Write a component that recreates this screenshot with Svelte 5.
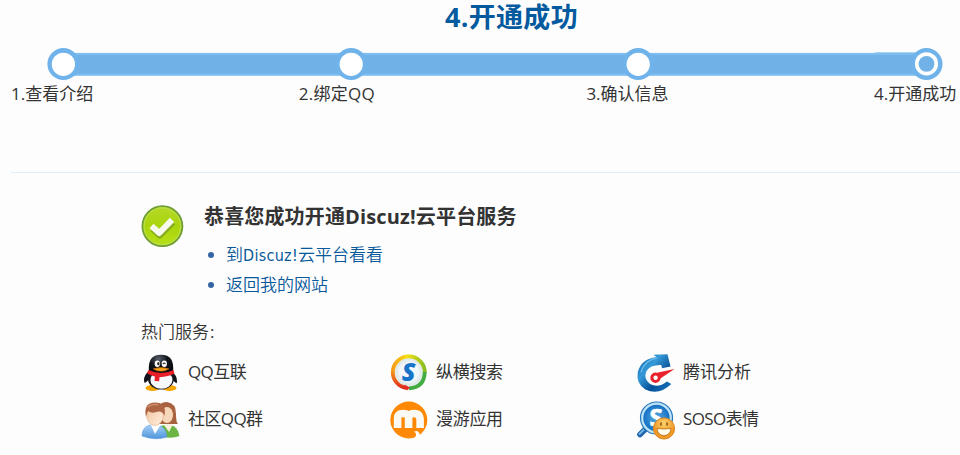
<script>
  const steps = ['1.查看介绍', '2.绑定QQ', '3.确认信息', '4.开通成功'];
  const services = [
    { name: 'QQ互联', icon: 'penguin' },
    { name: '纵横搜索', icon: 'search' },
    { name: '腾讯分析', icon: 'gauge' },
    { name: '社区QQ群', icon: 'people' },
    { name: '漫游应用', icon: 'roam' },
    { name: 'SOSO表情', icon: 'soso' }
  ];
</script>

<main>
  <h1>4.开通成功</h1>
  <svg class="track" width="960" height="32" viewBox="0 0 960 32">
    <rect x="63" y="4.9" width="863" height="22.9" fill="#7dbdf0" />
    <rect x="875" y="4.4" width="51" height="22.6" fill="#7dbdf0" />
    <rect x="63" y="7" width="863" height="18.5" fill="#70b2e7" />
    {#each [63.4, 351.2, 638.2, 926.5] as cx, i}
      <circle {cx} cy="16" r="16" fill="#70b3ea" />
      <circle {cx} cy={i === 3 ? 15.8 : 16.3} r="11.6" fill="#fff" />
      {#if i === 3}<circle {cx} cy="15.8" r="7.9" fill="#70b2e7" />{/if}
    {/each}
  </svg>
  <div class="steps">
    {#each steps as s}<span>{s}</span>{/each}
  </div>
  <section>
    <div class="result">
      <svg class="ok" width="44" height="44" viewBox="0 0 44 44">
        <defs>
          <linearGradient id="okg" x1="0" y1="0" x2="0" y2="1">
            <stop offset="0" stop-color="#b5d928" /><stop offset=".5" stop-color="#a9d50b" /><stop offset="1" stop-color="#b7e01a" />
          </linearGradient>
        </defs>
        <circle cx="22.4" cy="22.2" r="20" fill="url(#okg)" stroke="#6f9d35" stroke-width="1.8" />
        <circle cx="22.4" cy="22.2" r="18.4" fill="none" stroke="#bfdf56" stroke-width="1" />
        <path d="M12.6 24.7l7 6.8L33 18.3" fill="none" stroke="#86ad1b" stroke-width="6.3" stroke-linejoin="round" />
        <path d="M11.5 22l7.8 7L32 15.8" fill="none" stroke="#f7f9ef" stroke-width="6" stroke-linejoin="round" />
      </svg>
      <div>
        <h2>恭喜您成功开通Discuz!云平台服务</h2>
        <ul>
          <li><a href="#cloud">到<span class="latin">Discuz!</span>云平台看看</a></li>
          <li><a href="#site">返回我的网站</a></li>
        </ul>
      </div>
    </div>
    <p>热门服务<span class="colon">:</span></p>
    <div class="services">
      {#each services as s}
        <div class="service">
          <svg width="40" height="40" viewBox="0 0 40 40">
            {#if s.icon === 'penguin'}
              <defs>
                <radialGradient id="head" cx=".4" cy=".2" r=".8"><stop offset="0" stop-color="#59616d" /><stop offset=".45" stop-color="#10141b" /><stop offset="1" stop-color="#05070b" /></radialGradient>
              </defs>
              <path d="M8 17Q3 21 3 26q0 3 1 3l6-5M30 17q6 4 6 10 0 3-1 2l-6-5" fill="#11151b" />
              <ellipse cx="11.5" cy="34" rx="7" ry="3" fill="#f5a400" /><ellipse cx="28.5" cy="34" rx="7" ry="3" fill="#f5a400" />
              <ellipse cx="20" cy="25" rx="13" ry="10.5" fill="#15191f" />
              <ellipse cx="20.5" cy="26" rx="11" ry="8.8" fill="#f8f9fc" />
              <path d="M8 18Q6 .8 20 .8T32 18Q20 25 8 18" fill="url(#head)" />
              <ellipse cx="16.3" cy="9.7" rx="2.6" ry="3.3" fill="#fff" /><ellipse cx="23.3" cy="9.7" rx="2.6" ry="3.3" fill="#fff" />
              <ellipse cx="17.3" cy="9.7" rx="1.1" ry="1.6" fill="#222" /><path d="M22 10q1-2 2.4 0" fill="none" stroke="#222" stroke-width="1.2" />
              <path d="M12 14.8q8-2.5 16 0-3.5 2.5-8 2.5t-8-2.5" fill="#f6a21b" stroke="#b45b09" stroke-width=".6" />
              <path d="M7.5 16q13 6 25 0l1 3.6q-6 3.4-15 3.6l-.3 4-4.7-.2.4-4.6Q9 21.8 6 19z" fill="#e92028" />
            {:else if s.icon === 'search'}
              <defs>
                <linearGradient id="yel" x1="0" x2="1"><stop offset="0" stop-color="#f69b17" /><stop offset=".45" stop-color="#f5df12" /><stop offset="1" stop-color="#86bd1d" /></linearGradient>
                <linearGradient id="red" x1="0" y1="0" x2="0" y2="1"><stop offset="0" stop-color="#f39318" /><stop offset="1" stop-color="#df2d1d" /></linearGradient>
                <radialGradient id="sin"><stop offset=".6" stop-color="#f3f8fc" /><stop offset="1" stop-color="#dbe5e3" /></radialGradient>
              </defs>
              <circle cx="20" cy="18" r="14" fill="url(#sin)" />
              <path d="M3.8 18.4A16 16 0 0 1 35.8 18.4" fill="none" stroke="url(#yel)" stroke-width="3.8" />
              <path d="M3.8 17.4A15.7 15.7 0 0 0 18 34" fill="none" stroke="url(#red)" stroke-width="3.8" />
              <path d="M35.8 17.9Q35.3 33.6 20 34.4" fill="none" stroke="#43ac43" stroke-width="3.8" />
              <path d="M15 30.5l6 3-3 3z" fill="#e22b20" />
              <text x="19.4" y="27.2" text-anchor="middle" font-size="25" font-weight="800" font-style="italic" fill="#1674c9">S</text>
            {:else if s.icon === 'gauge'}
              <defs>
                <linearGradient id="blu" x1="0" y1="0" x2="1" y2="1"><stop offset="0" stop-color="#075cab" /><stop offset=".35" stop-color="#359ad7" /><stop offset=".65" stop-color="#065098" /><stop offset="1" stop-color="#197ac0" /></linearGradient>
              </defs>
              <path d="M34.5 12.5L31.5.3 17.5.8l3 2.3Q5 5 1.7 18.4 0 29.5 9.3 35.4 23 42 35.3 30L31 27.5Q22.5 34.5 14 30 7 24.5 10.5 17 14.5 10.5 25.2 11l.8 3.2z" fill="url(#blu)" />
              <path d="M21 3.7Q8 6.5 5 18.5" fill="none" stroke="#67b9e8" stroke-width="1.6" />
              <path d="M38.5 15L21 18.7a5.2 5.2 0 1 0 3.7 5.6z" fill="#e9222c" />
              <circle cx="19.6" cy="23.7" r="2.2" fill="#fff" />
            {:else if s.icon === 'people'}
              <defs>
                <linearGradient id="skin" x1="0" y1="0" x2="1" y2="1"><stop offset="0" stop-color="#f1c39d" /><stop offset="1" stop-color="#fff0df" /></linearGradient>
                <linearGradient id="shirt" x1="0" y1="0" x2="0" y2="1"><stop offset="0" stop-color="#a8d1f5" /><stop offset="1" stop-color="#4c94dc" /></linearGradient>
              </defs>
              <path d="M18 6q1-5 8-5 9 1 9 12 0 8 2 10H18z" fill="#a8623f" />
              <path d="M20 25q12-4 17 5l1.5 5Q31 38 23 36z" fill="#6bb544" />
              <ellipse cx="26" cy="14" rx="6" ry="8" fill="#f7d7b9" />
              <path d="M23 24l5 7 4-8z" fill="#f9f0db" />
              <path d="M1 35q0-9 8-11h9q7 3 8 12-12 4-25-1" fill="url(#shirt)" stroke="#5c9ddd" stroke-width=".6" />
              <path d="M9 22l5 11 6-10z" fill="#fff" />
              <ellipse cx="14" cy="14.5" rx="8.3" ry="10" fill="url(#skin)" stroke="#d29d74" stroke-width=".5" />
              <path d="M5 16Q2 1.5 14 1.5T23.5 15Q22 10 17 10.5 11 13 7 10q-1 2-2 6" fill="#ad6543" />
              <path d="M7 6q5-4 10-2" fill="none" stroke="#ca8966" stroke-width="1.8" />
            {:else if s.icon === 'roam'}
              <circle cx="19.8" cy="19" r="18.5" fill="#ff8905" />
              <path d="M8.6 27V17.5q0-5 5.5-5t5.5 5V27M19.6 17.5q0-5 5.5-5t6 5V27" fill="none" stroke="#faf9f3" stroke-width="7.6" />
              <path d="M25 30.5q4 2 .2 7.5l5-2.7q1.6-3-2-5.2z" fill="#fff" />
            {:else}
              <defs>
                <radialGradient id="lens"><stop offset="0" stop-color="#59abe0" /><stop offset="1" stop-color="#1571c5" /></radialGradient>
                <radialGradient id="face" cx=".5" cy=".25"><stop offset="0" stop-color="#ffd16c" /><stop offset="1" stop-color="#ee9927" /></radialGradient>
              </defs>
              <path d="M9 28.5l-5 5" stroke="#2164a9" stroke-width="5.6" stroke-linecap="round" />
              <path d="M8 28.5l-5 5" stroke="#74b8e8" stroke-width="1.8" />
              <circle cx="20.5" cy="17" r="16" fill="#bfe4f5" stroke="#2778bd" stroke-width="1.2" />
              <circle cx="20.5" cy="17" r="13.2" fill="url(#lens)" />
              <text x="19.8" y="24.5" text-anchor="middle" font-size="24" font-weight="700" fill="#fff" stroke="#fff" stroke-width=".7">S</text>
              <circle cx="28" cy="27.5" r="10.6" fill="url(#face)" stroke="#dd861c" stroke-width="1" />
              <path d="M21 27.5q7 1 14 0-1 7-7 7t-7-7" fill="#fffbed" stroke="#b9701d" stroke-width=".8" />
              <path d="M25 21.5v3M31 21.5v3" stroke="#90500d" stroke-width="1.6" />
            {/if}
          </svg>
          <span>{s.name}</span>
        </div>
      {/each}
    </div>
  </section>
</main>

<style>
  :global(body) { margin: 0; background: #fdfdfd; }
  main { width: 960px; height: 455px; overflow: hidden; color: #333; font: 17px/24px "Open Sans", "Noto Sans CJK SC", sans-serif; }
  h1, h2, p, ul { margin: 0; padding: 0; }
  h1 { height: 48px; padding-left: 445px; color: #045a9f; font-size: 27px; line-height: 34px; letter-spacing: .3px; white-space: nowrap; }
  .track { display: block; }
  .steps { display: grid; grid-template-columns: repeat(3, 287.7px) 86px; height: 92px; padding-left: 11px; white-space: nowrap; line-height: 27px; }
  .steps span:nth-child(2) { letter-spacing: .3px; }
  section { margin-left: 11px; padding: 30px 0 0 130px; border-top: 1px solid #dceef8; }
  .result { display: flex; height: 117px; }
  .ok { flex: none; margin: 1px 19px 0 -1px; }
  h2 { height: 36px; padding: 1px 0 0 1px; font-size: 20px; line-height: 26px; letter-spacing: .15px; white-space: nowrap; }
  ul { list-style: none; color: #3464a5; }
  li { display: flex; align-items: center; gap: 12px; height: 30px; padding-left: 5px; white-space: nowrap; }
  li::before { content: ''; width: 6px; height: 6px; border-radius: 50%; background: #3464a5; }
  a { color: #08599c; text-decoration: none; font-weight: 350; }
  .latin { font-family: "DejaVu Sans Condensed", "DejaVu Sans", sans-serif; font-stretch: condensed; font-size: 16px; letter-spacing: .3px; font-weight: 400; }
  p { height: 34px; font-weight: 350; }
  .colon { font-weight: 400; padding-left: 1px; }
  .services { display: grid; grid-template-columns: 248px 247px 190px; grid-auto-rows: 47px; }
  .service { display: flex; align-items: flex-start; gap: 7px; white-space: nowrap; letter-spacing: -.3px; }
  .service svg { flex: none; overflow: visible; }
  .service:nth-child(3) { letter-spacing: 0; }
  .service:nth-child(1), .service:nth-child(4), .service:nth-child(6) { letter-spacing: -.6px; }
  .service span { line-height: 35px; }
  .service text { font-family: "Open Sans", sans-serif; }
</style>
